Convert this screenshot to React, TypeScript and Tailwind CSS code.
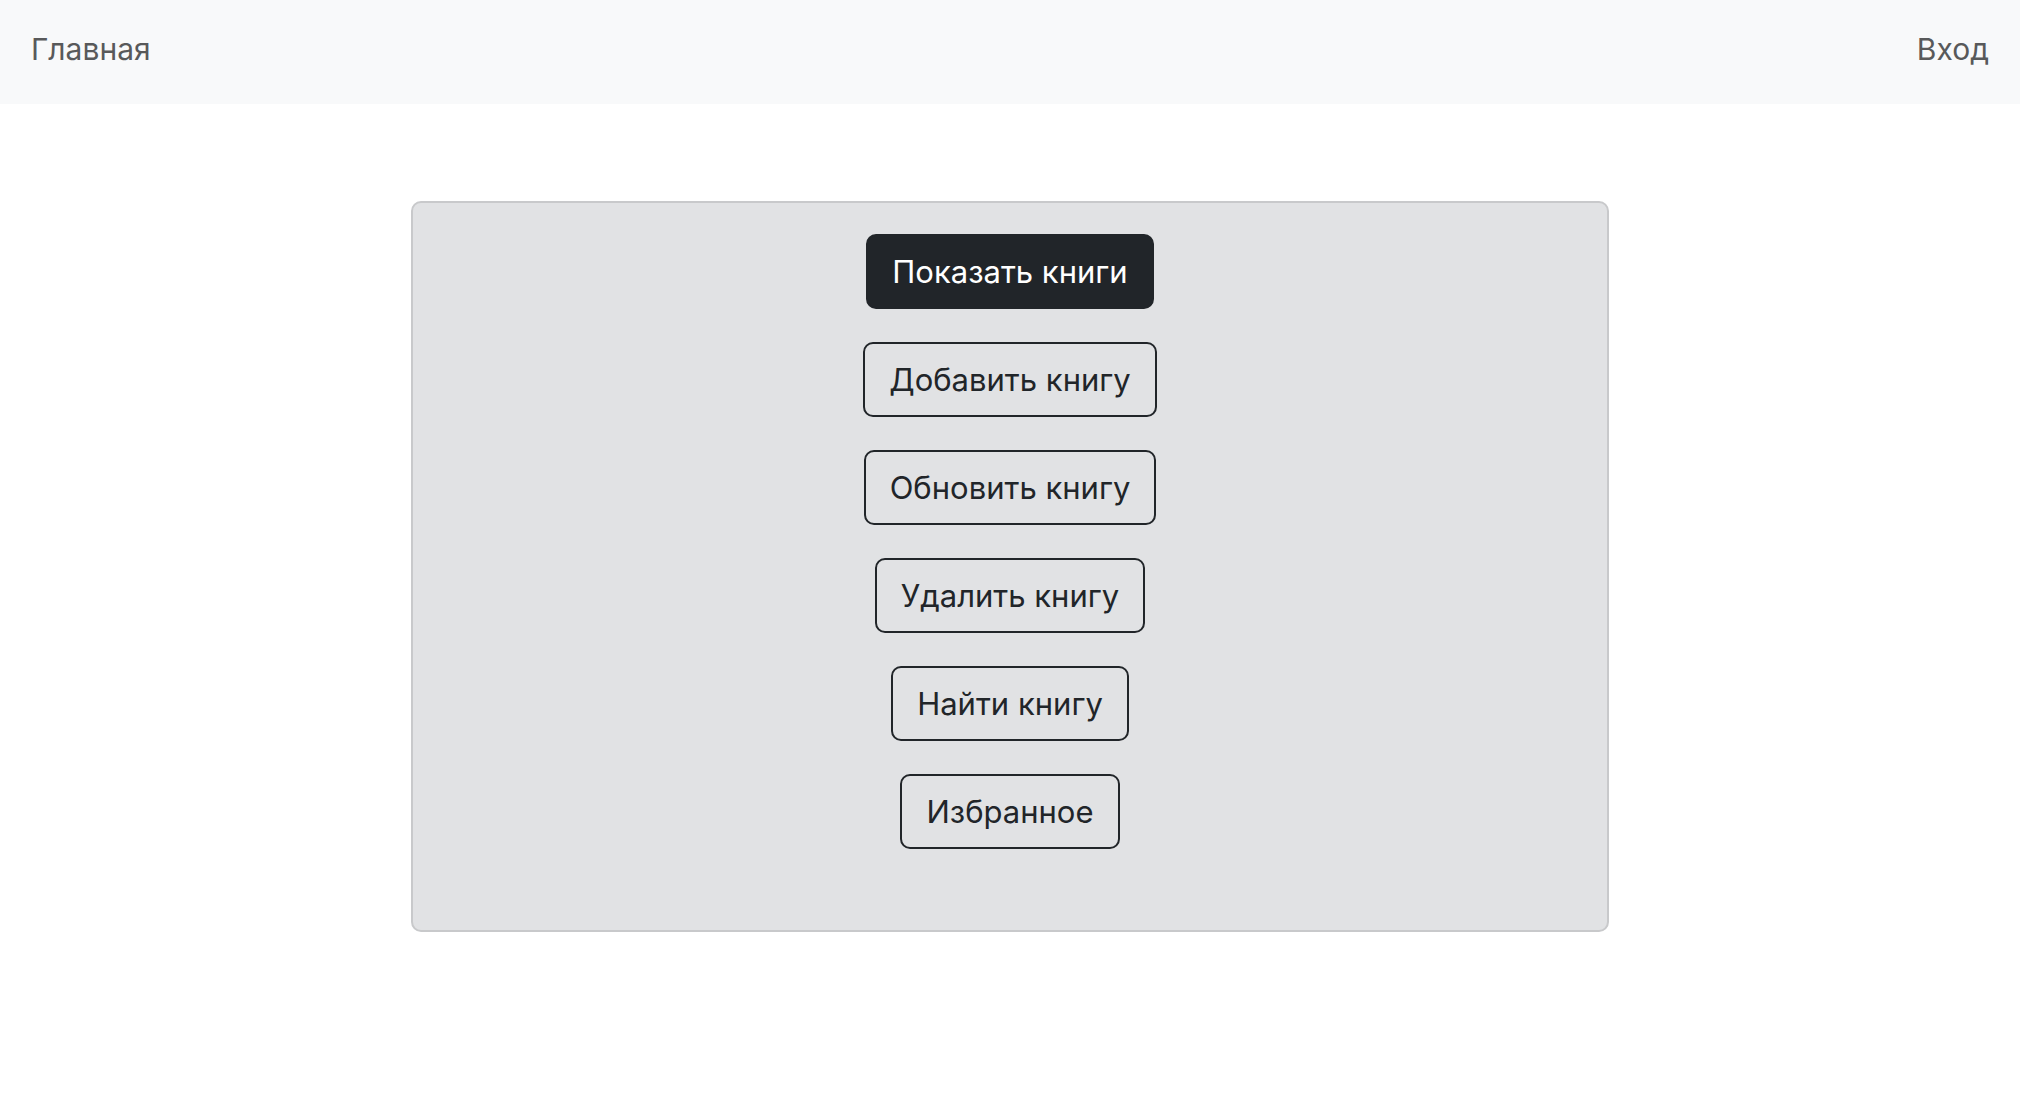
import React from 'react';

const ACTIONS = ['Добавить книгу', 'Обновить книгу', 'Удалить книгу', 'Найти книгу', 'Избранное'];

export default function App() {
  return (
    <div className="min-h-screen bg-white font-['Inter','Noto_Sans',sans-serif] text-[#212529]">
      {/* Navbar */}
      <nav className="h-[104px] bg-[#f8f9fa] flex items-center justify-between px-[31px]">
        <a className="text-[30px] text-[#58595a] leading-none pb-[6px]">Главная</a>
        <a className="text-[30px] text-[#58595a] leading-none pb-[6px]">Вход</a>
      </nav>

      {/* Menu card */}
      <div className="w-[1198px] mx-auto mt-[97px] bg-[#e1e2e4] border-2 border-[#c8c9cb] rounded-[10px] pt-[31px] pb-[81px] flex flex-col items-center gap-[33px]">
        <button className="h-[75px] px-[24px] rounded-[10px] bg-[#212529] border-2 border-[#212529] text-white text-[31px] leading-none">
          Показать книги
        </button>
        {ACTIONS.map(label => (
          <button
            key={label}
            className="h-[75px] px-[24px] rounded-[10px] border-2 border-[#212529] text-[#212529] text-[31px] leading-none"
          >
            {label}
          </button>
        ))}
      </div>
    </div>
  );
}
